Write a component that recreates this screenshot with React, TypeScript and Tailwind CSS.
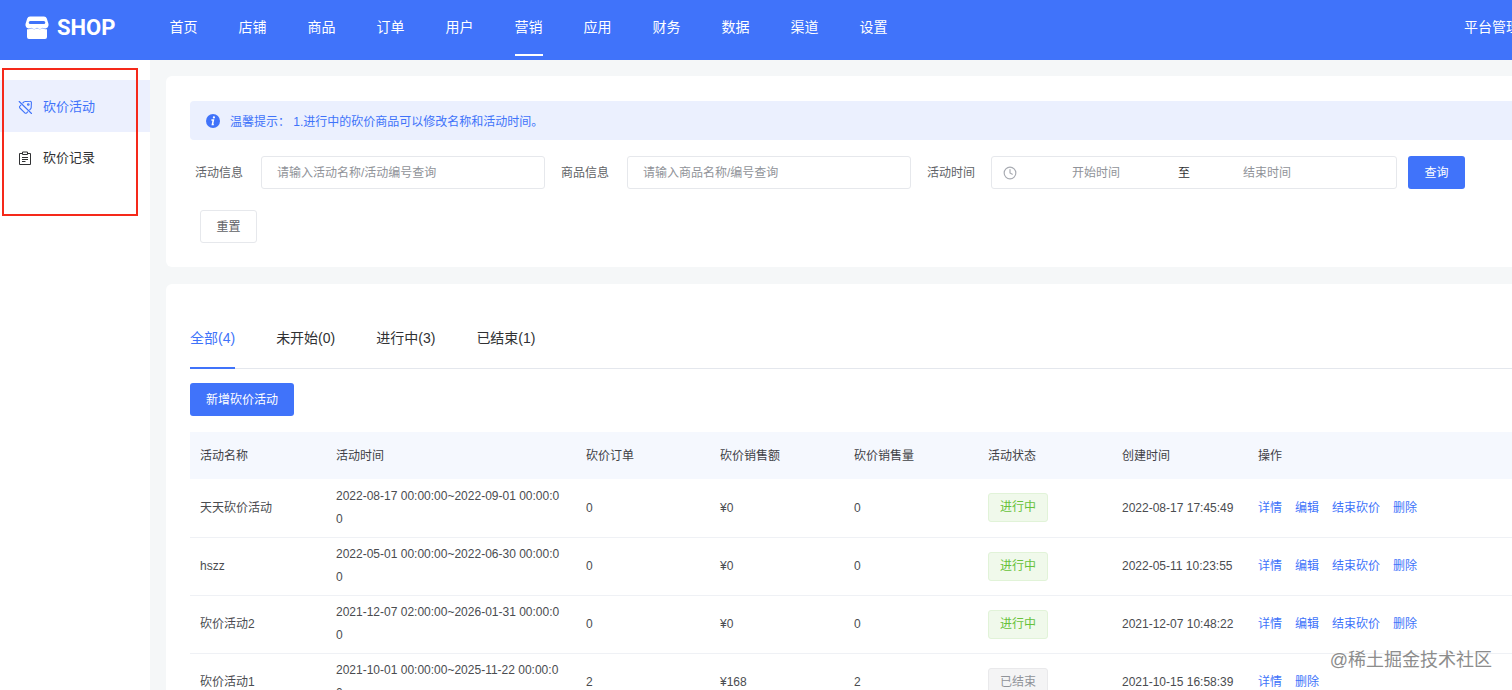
import { Clock } from "lucide-react";

const NAV_ITEMS = ["首页", "店铺", "商品", "订单", "用户", "营销", "应用", "财务", "数据", "渠道", "设置"];

const TABS = ["全部(4)", "未开始(0)", "进行中(3)", "已结束(1)"];

const COLUMNS = ["活动名称", "活动时间", "砍价订单", "砍价销售额", "砍价销售量", "活动状态", "创建时间", "操作"];

type Activity = {
  name: string;
  period: string;
  orders: number;
  amount: string;
  sales: number;
  active: boolean;
  createdAt: string;
};

const ACTIVITIES: Activity[] = [
  { name: "天天砍价活动", period: "2022-08-17 00:00:00~2022-09-01 00:00:00", orders: 0, amount: "¥0", sales: 0, active: true, createdAt: "2022-08-17 17:45:49" },
  { name: "hszz", period: "2022-05-01 00:00:00~2022-06-30 00:00:00", orders: 0, amount: "¥0", sales: 0, active: true, createdAt: "2022-05-11 10:23:55" },
  { name: "砍价活动2", period: "2021-12-07 02:00:00~2026-01-31 00:00:00", orders: 0, amount: "¥0", sales: 0, active: true, createdAt: "2021-12-07 10:48:22" },
  { name: "砍价活动1", period: "2021-10-01 00:00:00~2025-11-22 00:00:00", orders: 2, amount: "¥168", sales: 2, active: false, createdAt: "2021-10-15 16:58:39" },
];

function ShopLogo() {
  return (
    <svg width="24" height="24" viewBox="0 0 24 24" fill="none" aria-hidden="true">
      <path
        fill="#fff"
        fillRule="evenodd"
        d="M5 .5h14a3 3 0 0 1 2.800 2L23.500 8v1.500a3.500 3.500 0 0 1-5.800 2.200 4 4 0 0 1-5.700 0 4 4 0 0 1-5.700 0A3.500 3.500 0 0 1 .5 9.500V8l1.700-5.500A3 3 0 0 1 5 .5ZM5.200 5a1.500 1.500 0 0 0 0 3h13.600a1.500 1.500 0 0 0 0-3Z"
      />
      <path
        fill="#fff"
        d="M2 13.200c1.600.4 3 .1 4.300-.9 1.800 1.300 3.900 1.300 5.700 0 1.800 1.300 3.900 1.300 5.700 0 1.300 1 2.700 1.300 4.300.9V21a2 2 0 0 1-2 2H4a2 2 0 0 1-2-2Z"
      />
    </svg>
  );
}

function TagOffIcon() {
  return (
    <svg width="15" height="15" viewBox="0 0 15 15" fill="none" stroke="currentColor" strokeWidth="1.100" strokeLinecap="round" strokeLinejoin="round" aria-hidden="true">
      <path d="M4.800 3 6 1.900a1.500 1.500 0 0 1 1-.4L12 1.300a1.300 1.300 0 0 1 1.400 1.300L13.200 7.600a1.500 1.500 0 0 1-.4 1L11.700 9.800M9.700 11.800l-1 1a1.300 1.300 0 0 1-1.900 0L1.900 8a1.300 1.300 0 0 1 0-1.900l1-1" />
      <path d="m1.200 1.500 12.300 12" />
      <circle cx="10.300" cy="4.500" r=".8" />
    </svg>
  );
}

function ClipboardIcon() {
  return (
    <svg width="14" height="15" viewBox="0 0 14 15" fill="none" stroke="currentColor" aria-hidden="true">
      <path d="M4.500 2.500h-3v11h11v-11h-3" />
      <path d="M4.500 1h5v2.500h-5zM4 6.500h6M4 8.500h6M4 10.500h3.500" />
    </svg>
  );
}

function InfoIcon() {
  return (
    <svg width="14" height="14" viewBox="0 0 14 14" aria-hidden="true">
      <circle cx="7" cy="7" r="7" fill="#4073fa" />
      <circle cx="7.900" cy="3.400" r="1.100" fill="#fff" />
      <path d="M5.400 5.900h2L6.400 10.500h1.400" fill="none" stroke="#fff" strokeWidth="1.500" />
    </svg>
  );
}

function Header() {
  return (
    <header className="flex h-[60px] shrink-0 items-center overflow-hidden bg-[#4073fa] text-sm text-white">
      <a href="#" className="flex w-[149px] shrink-0 items-center gap-2 pb-1 pl-[25px]">
        <ShopLogo />
        <span className="font-[Roboto] text-[22px] leading-7 font-bold">SHOP</span>
      </a>
      <nav className="flex h-full shrink-0">
        {NAV_ITEMS.map((item) => (
          <a key={item} href="#" className="flex h-full w-[69px] justify-center">
            <span
              className={
                item === "营销"
                  ? "h-14 border-b-2 border-white leading-[54px]"
                  : "h-14 leading-[54px]"
              }
            >
              {item}
            </span>
          </a>
        ))}
      </nav>
      <a href="#" className="ml-auto h-full w-12 shrink-0 leading-[54px] whitespace-nowrap">
        平台管理员
      </a>
    </header>
  );
}

function Sidebar() {
  return (
    <aside className="relative w-[150px] shrink-0 bg-white pt-5 text-[13px]">
      <nav>
        <a href="#" className="flex h-[52px] items-center gap-2.5 bg-[#ecf0fe] pt-0.5 pl-[18px] text-[#4073fa]">
          <TagOffIcon />
          砍价活动
        </a>
        <a href="#" className="flex h-[52px] items-center gap-[11px] pl-[18px] text-[#303133]">
          <ClipboardIcon />
          砍价记录
        </a>
      </nav>
      <div className="pointer-events-none absolute top-2 left-0.5 h-[148px] w-[136px] border-2 border-[#f5291a]" />
    </aside>
  );
}

function SearchForm() {
  const inputStyle =
    "h-[33px] w-[284px] rounded-[3px] border border-[#e6e8ec] bg-white px-[15px] text-[#606266] outline-none placeholder:text-[#909399]";

  return (
    <form className="flex flex-wrap items-center gap-x-1.5 gap-y-[21px] pt-4 pl-[5px] text-[#606266]">
      <div className="mr-2.5 flex items-center gap-[18px]">
        <label htmlFor="activity">活动信息</label>
        <input id="activity" className={inputStyle} placeholder="请输入活动名称/活动编号查询" />
      </div>
      <div className="mr-2.5 flex items-center gap-[18px]">
        <label htmlFor="goods">商品信息</label>
        <input id="goods" className={inputStyle} placeholder="请输入商品名称/编号查询" />
      </div>
      <div className="flex items-center gap-4">
        <label htmlFor="start">活动时间</label>
        <div className="flex h-[33px] w-[406px] items-center rounded-[3px] border border-[#e6e8ec] px-[11px]">
          <Clock size={14} strokeWidth={2} className="text-[#a8abb2]" />
          <input id="start" className="w-[158px] text-center outline-none placeholder:text-[#909399]" placeholder="开始时间" />
          <span className="w-[18px] text-center text-[#303133]">至</span>
          <input aria-label="结束时间" className="w-[148px] text-center outline-none placeholder:text-[#909399]" placeholder="结束时间" />
        </div>
      </div>
      <button type="submit" className="ml-[5px] h-[33px] w-[57px] rounded-[3px] bg-[#4073fa] text-white">
        查询
      </button>
      <button type="reset" className="ml-[5px] h-[33px] w-[57px] rounded-[3px] border border-[#e6e8ec] bg-white">
        重置
      </button>
    </form>
  );
}

function StatusTag({ active }: { active: boolean }) {
  return (
    <span
      className={
        active
          ? "inline-block h-[29px] w-[60px] rounded-[3px] border border-[#e1f3d8] bg-[#f0f9eb] text-center leading-[27px] text-[#67c23a]"
          : "inline-block h-[29px] w-[60px] rounded-[3px] border border-[#e9e9eb] bg-[#f4f4f5] text-center leading-[27px] text-[#909399]"
      }
    >
      {active ? "进行中" : "已结束"}
    </span>
  );
}

function ActivityTable() {
  return (
    <table className="mt-4 w-full table-fixed text-left text-[#4a4c50]">
      <colgroup>
        <col className="w-[136px]" />
        <col className="w-[250px]" />
        <col className="w-[134px]" />
        <col className="w-[134px]" />
        <col className="w-[134px]" />
        <col className="w-[134px]" />
        <col className="w-[136px]" />
        <col />
      </colgroup>
      <thead>
        <tr className="h-[47px] bg-[#f5f8fe] text-[#3f4146]">
          {COLUMNS.map((column) => (
            <th key={column} className="px-2.5 font-normal">
              {column}
            </th>
          ))}
        </tr>
      </thead>
      <tbody>
        {ACTIVITIES.map((row) => (
          <tr key={row.createdAt} className="h-[58px] border-b border-[#eff1f5]">
            <td className="pl-2.5">{row.name}</td>
            <td className="pr-3 pl-2.5 leading-[23px] break-all">{row.period}</td>
            <td className="pl-2.5">{row.orders}</td>
            <td className="pl-2.5">{row.amount}</td>
            <td className="pl-2.5">{row.sales}</td>
            <td className="pl-2.5">
              <StatusTag active={row.active} />
            </td>
            <td className="pl-2.5 whitespace-nowrap">{row.createdAt}</td>
            <td className="pl-2.5">
              <div className="flex gap-[13px] text-[#4073fa]">
                <button>详情</button>
                {row.active && <button>编辑</button>}
                {row.active && <button>结束砍价</button>}
                <button>删除</button>
              </div>
            </td>
          </tr>
        ))}
      </tbody>
    </table>
  );
}

export default function App() {
  return (
    <div className="relative flex h-screen flex-col overflow-hidden bg-[#f5f7f8] font-['Liberation_Sans','Noto_Sans_CJK_SC',sans-serif] text-xs">
      <Header />
      <div className="flex min-h-0 flex-1">
        <Sidebar />
        <main className="min-w-0 flex-1 overflow-hidden pt-4 pl-4">
          <section className="rounded-l-md bg-white pt-[25px] pb-6 pl-6">
            <div className="flex h-[39px] items-center gap-2.5 rounded-l-sm bg-[#ebf0fe] pl-4 text-[#4073fa]">
              <InfoIcon />
              <p className="pt-0.5">温馨提示： 1.进行中的砍价商品可以修改名称和活动时间。</p>
            </div>
            <SearchForm />
          </section>

          <section className="mt-[17px] rounded-l-md bg-white pt-6 pl-6">
            <div className="flex gap-[41px] border-b border-[#e4e7ed] text-sm text-[#303133]">
              {TABS.map((tab, i) => (
                <button
                  key={tab}
                  className={
                    i === 0
                      ? "-mb-px h-[61px] border-b-2 border-[#4073fa] text-[#4073fa]"
                      : "-mb-px h-[61px] border-b-2 border-transparent"
                  }
                >
                  {tab}
                </button>
              ))}
            </div>
            <button className="mt-3.5 h-[33px] rounded-[3px] bg-[#4073fa] px-4 text-white">新增砍价活动</button>
            <ActivityTable />
          </section>
        </main>
      </div>
      <div className="pointer-events-none absolute right-5 bottom-4 text-lg text-[#8c8c8c]">@稀土掘金技术社区</div>
    </div>
  );
}
